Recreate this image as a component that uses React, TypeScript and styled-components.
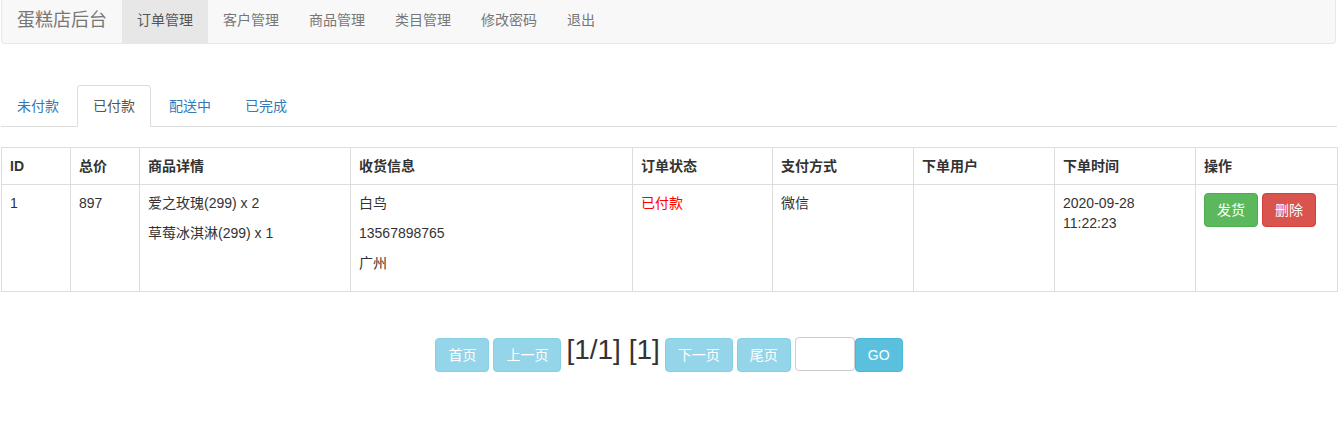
import React, { useState } from "react";
import styled, { createGlobalStyle } from "styled-components";

const GlobalStyle = createGlobalStyle`
  html, body {
    margin: 0;
    padding: 0;
    background: #fff;
  }
  body {
    font-family: "Liberation Sans", Arial, "Noto Sans CJK SC", sans-serif;
    font-size: 14px;
    line-height: 20px;
    color: #333;
  }
  * { box-sizing: border-box; }
`;

const Page = styled.div`
  width: 1337px;
  padding-left: 1px;
`;

const Navbar = styled.nav`
  display: flex;
  height: 44px;
  background: #f8f8f8;
  border: 1px solid #e7e7e7;
  border-top: none;
  border-radius: 0 0 4px 4px;
  margin-right: 1px;
`;

const Brand = styled.a`
  padding: 10px 15px 0 15px;
  font-size: 18px;
  line-height: 20px;
  color: #777;
  text-decoration: none;
`;

const NavItem = styled.a<{ $active?: boolean }>`
  padding: 10px 15px 0 15px;
  line-height: 20px;
  color: ${(p) => (p.$active ? "#555" : "#777")};
  background: ${(p) => (p.$active ? "#e7e7e7" : "transparent")};
  text-decoration: none;
  cursor: pointer;
`;

const Tabs = styled.ul`
  display: flex;
  list-style: none;
  margin: 41px 0 0 0;
  padding: 0;
  border-bottom: 1px solid #ddd;
`;

const Tab = styled.li<{ $active?: boolean }>`
  margin-right: 2px;
  margin-bottom: -1px;
  padding: 10px 15px;
  line-height: 20px;
  border: 1px solid ${(p) => (p.$active ? "#ddd" : "transparent")};
  border-bottom-color: ${(p) => (p.$active ? "#fff" : "transparent")};
  border-radius: 4px 4px 0 0;
  background: ${(p) => (p.$active ? "#fff" : "transparent")};
  color: ${(p) => (p.$active ? "#555" : "#337ab7")};
  cursor: pointer;
`;

const Table = styled.table`
  margin-top: 20px;
  width: 1336px;
  table-layout: fixed;
  border-collapse: collapse;
  border: 1px solid #ddd;
`;

const Th = styled.th<{ $w: number }>`
  width: ${(p) => p.$w}px;
  padding: 8px;
  text-align: left;
  font-weight: bold;
  vertical-align: bottom;
  border: 1px solid #ddd;
  line-height: 20px;
`;

const Td = styled.td`
  padding: 8px;
  vertical-align: top;
  border: 1px solid #ddd;
  line-height: 20px;
`;

const Line = styled.p`
  margin: 0 0 10px 0;
`;

const Status = styled.span`
  color: red;
`;

const Btn = styled.button<{ $variant: "success" | "danger" }>`
  display: inline-block;
  padding: 6px 12px;
  font-family: inherit;
  font-size: 14px;
  line-height: 20px;
  border-radius: 4px;
  color: #fff;
  cursor: pointer;
  background: ${(p) => (p.$variant === "success" ? "#5cb85c" : "#d9534f")};
  border: 1px solid ${(p) => (p.$variant === "success" ? "#4cae4c" : "#d43f3a")};
  & + & {
    margin-left: 4px;
  }
`;

const Pager = styled.div`
  margin-top: 46px;
  display: flex;
  justify-content: center;
  align-items: center;
  gap: 4px;
`;

const PageBtn = styled.button<{ $disabled?: boolean }>`
  padding: 6px 12px;
  font-family: inherit;
  font-size: 14px;
  line-height: 20px;
  color: #fff;
  background: #5bc0de;
  border: 1px solid #46b8da;
  border-radius: 4px;
  opacity: ${(p) => (p.$disabled ? 0.65 : 1)};
  cursor: ${(p) => (p.$disabled ? "not-allowed" : "pointer")};
`;

const GoBtn = styled(PageBtn)`
  margin-left: -4px;
`;

const PageInfo = styled.span`
  font-size: 28px;
  line-height: 30px;
  color: #333;
  margin-top: -10px;
  padding: 0 1px;
`;

const PageInput = styled.input`
  width: 60px;
  height: 34px;
  margin-top: -2px;
  border: 1px solid #ccc;
  border-radius: 4px;
  padding: 6px;
  font-size: 14px;
`;

const cols: [string, number][] = [
  ["ID", 69],
  ["总价", 69],
  ["商品详情", 211],
  ["收货信息", 282],
  ["订单状态", 140],
  ["支付方式", 141],
  ["下单用户", 141],
  ["下单时间", 141],
  ["操作", 142],
];

const navItems = ["订单管理", "客户管理", "商品管理", "类目管理", "修改密码", "退出"];
const tabs = ["未付款", "已付款", "配送中", "已完成"];

export default function App() {
  const [tab, setTab] = useState(1);
  const [page, setPage] = useState("");

  return (
    <Page>
      <GlobalStyle />
      <Navbar>
        <Brand>蛋糕店后台</Brand>
        {navItems.map((n, i) => (
          <NavItem key={n} $active={i === 0}>
            {n}
          </NavItem>
        ))}
      </Navbar>

      <Tabs>
        {tabs.map((t, i) => (
          <Tab key={t} $active={i === tab} onClick={() => setTab(i)}>
            {t}
          </Tab>
        ))}
      </Tabs>

      <Table>
        <colgroup>
          {cols.map(([name, w]) => (
            <col key={name} style={{ width: w }} />
          ))}
        </colgroup>
        <thead>
          <tr>
            {cols.map(([name, w]) => (
              <Th key={name} $w={w}>
                {name}
              </Th>
            ))}
          </tr>
        </thead>
        <tbody>
          <tr>
            <Td>1</Td>
            <Td>897</Td>
            <Td>
              <Line>爱之玫瑰(299) x 2</Line>
              <Line>草莓冰淇淋(299) x 1</Line>
            </Td>
            <Td>
              <Line>白鸟</Line>
              <Line>13567898765</Line>
              <Line>广州</Line>
            </Td>
            <Td>
              <Status>已付款</Status>
            </Td>
            <Td>微信</Td>
            <Td></Td>
            <Td>2020-09-28 11:22:23</Td>
            <Td>
              <Btn $variant="success">发货</Btn>
              <Btn $variant="danger">删除</Btn>
            </Td>
          </tr>
        </tbody>
      </Table>

      <Pager>
        <PageBtn $disabled>首页</PageBtn>
        <PageBtn $disabled>上一页</PageBtn>
        <PageInfo>[1/1] [1]</PageInfo>
        <PageBtn $disabled>下一页</PageBtn>
        <PageBtn $disabled>尾页</PageBtn>
        <PageInput value={page} onChange={(e) => setPage(e.target.value)} />
        <GoBtn>GO</GoBtn>
      </Pager>
    </Page>
  );
}
